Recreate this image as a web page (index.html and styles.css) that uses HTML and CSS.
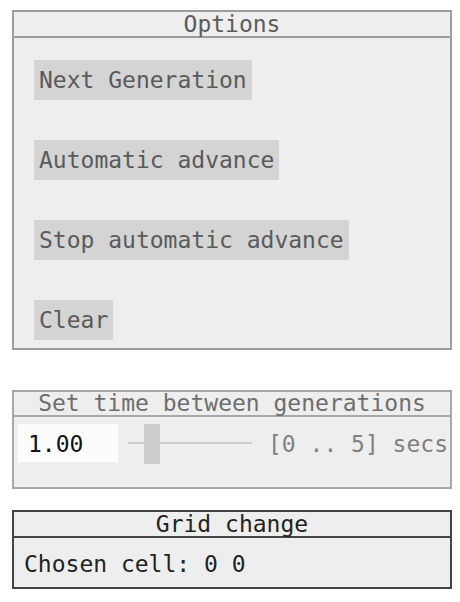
FILE: index.html
```html
<!DOCTYPE html>
<html>
<head>
<meta charset="utf-8">
<link rel="stylesheet" href="styles.css">
</head>
<body>
<div class="page">
  <section class="panel panel-options">
    <div class="panel-title">Options</div>
    <div class="options-body">
      <div class="btn">Next Generation</div>
      <div class="btn">Automatic advance</div>
      <div class="btn">Stop automatic advance</div>
      <div class="btn">Clear</div>
    </div>
  </section>

  <section class="panel panel-time">
    <div class="panel-title">Set time between generations</div>
    <div class="time-body">
      <div class="num-input">1.00</div>
      <div class="slider">
        <div class="slider-track"></div>
        <div class="slider-thumb" style="left:16px"></div>
      </div>
      <div class="range-label">[0 .. 5] secs</div>
    </div>
  </section>

  <section class="panel panel-grid">
    <div class="panel-title">Grid change</div>
    <div class="grid-body">Chosen cell: 0 0</div>
  </section>
</div>
</body>
</html>
```

FILE: styles.css
```css
html, body {
  margin: 0;
  padding: 0;
  background: #ffffff;
}

body {
  font-family: "DejaVu Sans Mono", "Liberation Mono", monospace;
  font-size: 23px;
  color: #5c5c5c;
}

.page {
  display: flex;
  flex-direction: column;
  padding: 10px 0 0 12px;
  width: 440px;
}

.panel {
  box-sizing: border-box;
  width: 440px;
  border: 2px solid #9c9c9c;
  background: #eeeeee;
}

.panel-title {
  height: 24px;
  line-height: 24px;
  text-align: center;
  border-bottom: 2px solid #9c9c9c;
  white-space: pre;
}

.options-body {
  display: flex;
  flex-direction: column;
  align-items: flex-start;
  gap: 40px;
  padding: 22px 0 8px 20px;
}

.btn {
  background: #d4d4d4;
  height: 40px;
  line-height: 40px;
  padding: 0 5px;
  color: #5a5a5a;
  white-space: pre;
}

.panel-time {
  margin-top: 40px;
  border-color: #a8a8a8;
}

.panel-time .panel-title {
  height: 23px;
  line-height: 23px;
  border-bottom-color: #a8a8a8;
  color: #6e6e6e;
}

.time-body {
  display: flex;
  align-items: flex-start;
  height: 70px;
  padding: 7px 0 0 4px;
  box-sizing: border-box;
}

.num-input {
  width: 100px;
  height: 38px;
  line-height: 40px;
  box-sizing: border-box;
  padding-left: 10px;
  background: #fcfcfc;
  color: #111111;
}

.slider {
  position: relative;
  width: 124px;
  height: 40px;
  margin-left: 10px;
}

.slider-track {
  position: absolute;
  left: 0;
  right: 0;
  top: 18px;
  height: 2px;
  background: #cccccc;
}

.slider-thumb {
  position: absolute;
  top: 0;
  width: 16px;
  height: 40px;
  background: #cccccc;
}

.range-label {
  margin-left: 16px;
  height: 38px;
  line-height: 40px;
  color: #808080;
  white-space: pre;
}

.panel-grid {
  margin-top: 21px;
  border-color: #444444;
  color: #222222;
}

.panel-grid .panel-title {
  border-bottom-color: #444444;
}

.grid-body {
  height: 49px;
  line-height: 52px;
  padding-left: 10px;
  white-space: pre;
}
```
